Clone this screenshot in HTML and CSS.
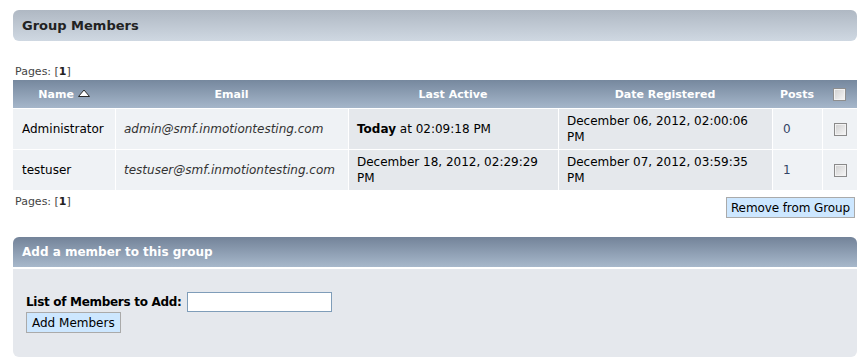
FILE: index.html
```html
<!DOCTYPE html>
<html>
<head>
<meta charset="utf-8">
<link rel="stylesheet" href="styles.css">
</head>
<body>
<div class="page">
  <div class="title-bar"><h3>Group Members</h3></div>
  <div class="pages pages-top">Pages: [<strong>1</strong>]</div>
  <table class="grid">
    <thead>
      <tr>
        <th class="c-name">Name <svg class="sort" width="12" height="8" viewBox="0 0 12 8"><path d="M0.5 7.5 L6 1 L11.5 7.5 Z" fill="#fff" stroke="#2a2a2a" stroke-width="1"/></svg></th>
        <th class="c-email">Email</th>
        <th class="c-last">Last Active</th>
        <th class="c-reg">Date Registered</th>
        <th class="c-posts">Posts</th>
        <th class="c-check"><span class="cb"></span></th>
      </tr>
    </thead>
    <tbody>
      <tr>
        <td class="light">Administrator</td>
        <td class="light email">admin@smf.inmotiontesting.com</td>
        <td class="dark"><strong>Today</strong> at 02:09:18 PM</td>
        <td class="dark">December 06, 2012, 02:00:06 PM</td>
        <td class="light posts">0</td>
        <td class="light check"><span class="cb"></span></td>
      </tr>
      <tr>
        <td class="light">testuser</td>
        <td class="light email">testuser@smf.inmotiontesting.com</td>
        <td class="dark">December 18, 2012, 02:29:29 PM</td>
        <td class="dark">December 07, 2012, 03:59:35 PM</td>
        <td class="light posts">1</td>
        <td class="light check"><span class="cb"></span></td>
      </tr>
    </tbody>
  </table>
  <div class="below">
    <div class="pages">Pages: [<strong>1</strong>]</div>
    <button class="btn">Remove from Group</button>
  </div>
  <div class="cat-bar"><h3>Add a member to this group</h3></div>
  <div class="panel">
    <div class="add-row">
      <label class="add-label">List of Members to Add:</label>
      <input class="add-input" type="text">
    </div>
    <button class="btn">Add Members</button>
  </div>
</div>
</body>
</html>
```

FILE: styles.css
```css
html, body {
  margin: 0;
  padding: 0;
  background: #fff;
}
body {
  font-family: "DejaVu Sans", Verdana, sans-serif;
  font-size: 12px;
  color: #000;
}
.page {
  padding: 10px 9px 0 13px;
}
.title-bar {
  height: 31px;
  border-radius: 6px;
  background: linear-gradient(#afb8c3, #cfd8e2);
  display: flex;
  align-items: center;
  padding-left: 9px;
}
.title-bar h3 {
  margin: 0;
  font-size: 13px;
  font-weight: bold;
  color: #222;
}
.pages {
  font-size: 11px;
  color: #444;
  padding-left: 2px;
}
.pages strong {
  color: #222;
}
.pages-top {
  margin-top: 22px;
  height: 17px;
  line-height: 17px;
}
.grid {
  width: 844px;
  border-collapse: separate;
  border-spacing: 0;
  table-layout: fixed;
}
.grid th {
  height: 28px;
  padding: 0;
  background: linear-gradient(#76889e, #a5b6ca);
  color: #fff;
  font-size: 11px;
  font-weight: bold;
  text-align: center;
  vertical-align: middle;
}
.sort {
  vertical-align: 1px;
}
.c-name { width: 102px; }
.c-email { width: 233px; }
.c-last { width: 210px; }
.c-reg { width: 214px; }
.c-posts { width: 50px; }
.c-check { width: 35px; }
.grid td {
  border-top: 1px solid #fff;
  border-left: 1px solid #fff;
  padding: 0 8px;
  height: 40px;
  line-height: 16px;
  vertical-align: middle;
}
.grid td:first-child {
  border-left: none;
  padding-left: 9px;
}
.grid td.light { background: #eff2f5; }
.grid td.dark { background: #e5e8ec; }
.grid td.email {
  font-style: italic;
  color: #333;
}
.grid td.posts {
  color: #334466;
  padding-left: 10px;
}
.grid td.check,
.grid th.c-check {
  text-align: center;
}
.cb {
  display: inline-block;
  width: 11px;
  height: 11px;
  border: 1px solid #8a8a8a;
  background: linear-gradient(135deg, #cfcfcf, #f7f7f7);
  box-shadow: inset 0 0 0 1px #f2f2f2;
  vertical-align: middle;
}
.grid th .cb {
  border-color: #8e8e8e;
}
.below {
  display: flex;
  justify-content: space-between;
  align-items: flex-start;
  padding-top: 5px;
  height: 47px;
  box-sizing: border-box;
}
.below .pages {
  line-height: 14px;
}
.btn {
  font-family: "DejaVu Sans", Verdana, sans-serif;
  font-size: 12px;
  color: #000;
  background: #cde7ff;
  border: 1px solid #aaa;
  padding: 0 5px;
  height: 21px;
  margin: 0;
}
.below .btn {
  margin-top: 2px;
  margin-right: 2px;
  padding: 0 4px;
  letter-spacing: -0.1px;
}
.cat-bar {
  height: 30px;
  border-radius: 6px 6px 0 0;
  background: linear-gradient(#738399, #a7b8cb);
  display: flex;
  align-items: center;
  padding-left: 9px;
}
.cat-bar h3 {
  margin: 0;
  font-size: 12px;
  font-weight: bold;
  color: #fff;
}
.panel {
  margin-top: 2px;
  height: 88px;
  box-sizing: border-box;
  background: #e5e8ed;
  border-radius: 0 0 6px 6px;
  padding: 23px 13px 0;
}
.add-row {
  display: flex;
  align-items: center;
  gap: 5px;
}
.add-label {
  font-weight: bold;
  font-size: 12px;
  letter-spacing: -0.3px;
}
.add-input {
  width: 145px;
  height: 20px;
  box-sizing: border-box;
  border: 1px solid #7f9db9;
  background: #fff;
  margin: 0;
  padding: 0 2px;
}
.panel .btn {
  display: block;
}
```
